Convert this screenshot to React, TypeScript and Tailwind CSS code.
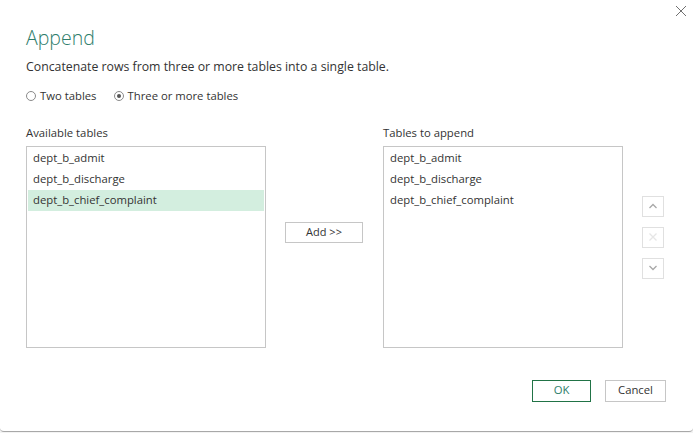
import { useState } from 'react';

const available = ['dept_b_admit', 'dept_b_discharge', 'dept_b_chief_complaint'];
const toAppend = ['dept_b_admit', 'dept_b_discharge', 'dept_b_chief_complaint'];

const font = { fontFamily: '"Open Sans", "Noto Sans", sans-serif' };

const Radio = ({ checked, label, onClick }: { checked: boolean; label: string; onClick: () => void }) => (
  <button type="button" onClick={onClick} className="flex items-center gap-[4px] text-[11.3px] text-[#333]">
    <span className="w-[10px] h-[10px] rounded-full border border-[#8a8a8a] bg-white flex items-center justify-center">
      {checked && <span className="w-[4px] h-[4px] rounded-full bg-[#555]" />}
    </span>
    <span>{label}</span>
  </button>
);

const ListBox = ({ items, selected, onSelect }: { items: string[]; selected?: number; onSelect?: (i: number) => void }) => (
  <div className="w-[240px] h-[202px] border border-[#c6c6c6] bg-white p-[1px]">
    {items.map((item, i) => (
      <div
        key={item}
        onClick={() => onSelect && onSelect(i)}
        className={`h-[21px] flex items-center pl-[5px] text-[11.3px] text-[#333] ${selected === i ? 'bg-[#d3eedf]' : ''}`}
      >
        {item}
      </div>
    ))}
  </div>
);

const SideButton = ({ children }: { children: React.ReactNode }) => (
  <div className="w-[22px] h-[21px] border border-[#e0e0e0] flex items-center justify-center">{children}</div>
);

export default function App() {
  const [mode, setMode] = useState<'two' | 'three'>('three');
  const [sel, setSel] = useState(2);

  return (
    <div className="w-[693px] h-[433px] bg-[#f3f3f3] overflow-hidden" style={font}>
      <div className="relative h-[432px] bg-white border-b border-[#a8a8a8] rounded-b-[4px]">
        {/* close */}
        <button type="button" className="absolute top-[5px] right-[6px] w-[12px] h-[12px]">
          <svg width="12" height="12" viewBox="0 0 12 12">
            <path d="M1 1 L11 11 M11 1 L1 11" stroke="#707070" strokeWidth="1" />
          </svg>
        </button>

        <div className="pl-[26px] pt-[24px]">
          <h1 className="text-[19.5px] font-light text-[#2e7d6b] leading-[28px]">Append</h1>
          <p className="text-[12.3px] text-[#333] mt-[6px] leading-[18px]">
            Concatenate rows from three or more tables into a single table.
          </p>

          <div className="flex gap-[17px] mt-[12px]">
            <Radio checked={mode === 'two'} label="Two tables" onClick={() => setMode('two')} />
            <Radio checked={mode === 'three'} label="Three or more tables" onClick={() => setMode('three')} />
          </div>

          <div className="flex mt-[20px]">
            <div>
              <div className="text-[11.3px] text-[#333] leading-[16px] mb-[5px]">Available tables</div>
              <ListBox items={available} selected={sel} onSelect={setSel} />
            </div>

            <div className="w-[117px] pl-[19px] pt-[93px]">
              <button type="button" className="w-[78px] h-[21px] border border-[#c6c6c6] bg-white text-[11px] text-[#333]">
                Add &gt;&gt;
              </button>
            </div>

            <div>
              <div className="text-[11.3px] text-[#333] leading-[16px] mb-[5px]">Tables to append</div>
              <ListBox items={toAppend} />
            </div>

            <div className="pl-[19px] pt-[71px] flex flex-col gap-[10px]">
              <SideButton>
                <svg width="10" height="6" viewBox="0 0 10 6">
                  <path d="M1.5 5 L5 1.5 L8.5 5" fill="none" stroke="#a8a8a8" strokeWidth="1.3" />
                </svg>
              </SideButton>
              <SideButton>
                <svg width="10" height="10" viewBox="0 0 10 10">
                  <path d="M1.5 1.5 L8.5 8.5 M8.5 1.5 L1.5 8.5" fill="none" stroke="#e6e6e6" strokeWidth="1.3" />
                </svg>
              </SideButton>
              <SideButton>
                <svg width="10" height="6" viewBox="0 0 10 6">
                  <path d="M1.5 1 L5 4.5 L8.5 1" fill="none" stroke="#a8a8a8" strokeWidth="1.3" />
                </svg>
              </SideButton>
            </div>
          </div>

          <div className="flex justify-end gap-[14px] mt-[32px] pr-[27px]">
            <button type="button" className="w-[59px] h-[22px] border border-[#217346] text-[11.3px] text-[#2e7d6b] bg-white">
              OK
            </button>
            <button type="button" className="w-[61px] h-[22px] border border-[#c6c6c6] text-[11.3px] text-[#333] bg-white">
              Cancel
            </button>
          </div>
        </div>
      </div>
    </div>
  );
}
